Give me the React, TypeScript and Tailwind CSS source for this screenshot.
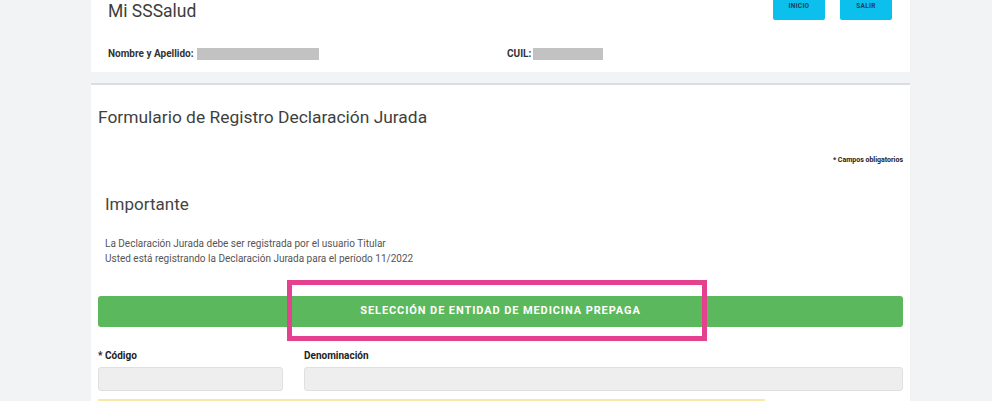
export default function App() {
  return (
    <div className="h-[401px] overflow-hidden bg-[#f2f3f5] font-['Roboto',sans-serif] text-[#444]">
      <div className="ml-[91px] w-[819px]">
        {/* cabecera */}
        <header className="flow-root h-[72px] bg-white pl-[17px] pr-[18px]">
          <div className="-mt-[10px] flex items-start justify-between">
            <h1 className="pt-[9px] text-[17.5px] leading-[24px] text-[#3d3d3d]">Mi SSSalud</h1>
            <div className="flex gap-[15px]">
              <button className="h-[30px] w-[52px] rounded-[2px] bg-[#0cc0ee] pt-[4px] text-[6.5px] font-bold tracking-[0.3px] text-[#1d3c5c]">
                INICIO
              </button>
              <button className="h-[30px] w-[52px] rounded-[2px] bg-[#0cc0ee] pt-[4px] text-[6.5px] font-bold tracking-[0.3px] text-[#1d3c5c]">
                SALIR
              </button>
            </div>
          </div>
          <div className="mt-[23px] flex items-center text-[10px] font-bold text-[#333]">
            <div className="flex w-[399px] items-center">
              <span>Nombre y Apellido:</span>
              <span className="ml-[3px] h-[12px] w-[122px] bg-[#c2c2c2]" />
            </div>
            <div className="flex items-center">
              <span>CUIL:</span>
              <span className="ml-[2px] h-[12px] w-[70px] bg-[#c2c2c2]" />
            </div>
          </div>
        </header>

        {/* formulario */}
        <main className="mt-[11px] border-t-[2px] border-[#dcdde0] bg-white px-[7px] pt-[18px]">
          <h2 className="text-[17.4px] leading-[28px] text-[#3f3f3f]">
            Formulario de Registro Declaración Jurada
          </h2>
          <p className="mt-[24px] text-right text-[7px] font-bold text-[#222]">* Campos obligatorios</p>

          <section className="px-[7px] pt-[26px]">
            <h3 className="text-[17px] leading-[24px] text-[#444]">Importante</h3>
            <div className="mt-[20px] text-[10px] leading-[15px] text-[#555]">
              <p>La Declaración Jurada debe ser registrada por el usuario Titular</p>
              <p>Usted está registrando la Declaración Jurada para el período 11/2022</p>
            </div>
          </section>

          <div className="relative mt-[30px]">
            <div className="flex h-[31px] items-center justify-center rounded-[3px] bg-[#5cb85c] text-[11px] font-bold tracking-[0.9px] text-white">
              SELECCIÓN DE ENTIDAD DE MEDICINA PREPAGA
            </div>
            <div className="absolute left-[189px] top-[-16px] h-[61px] w-[420px] border-[5px] border-[#e4428e]" />
          </div>

          <div className="mt-[21px] flex gap-[21px] text-[10px] font-bold text-[#222]">
            <div className="w-[185px]">
              <label>* Código</label>
              <div className="mt-[4px] h-[24px] rounded-[3px] border border-[#e0e0e0] bg-[#eeeeee]" />
            </div>
            <div className="flex-1">
              <label>Denominación</label>
              <div className="mt-[4px] h-[24px] rounded-[3px] border border-[#e0e0e0] bg-[#eeeeee]" />
            </div>
          </div>

          <div className="mt-[8px] h-[10px] w-[667px] border-t-[2px] border-[#fde6a6] bg-[#fffbef]" />
        </main>
      </div>
    </div>
  );
}
